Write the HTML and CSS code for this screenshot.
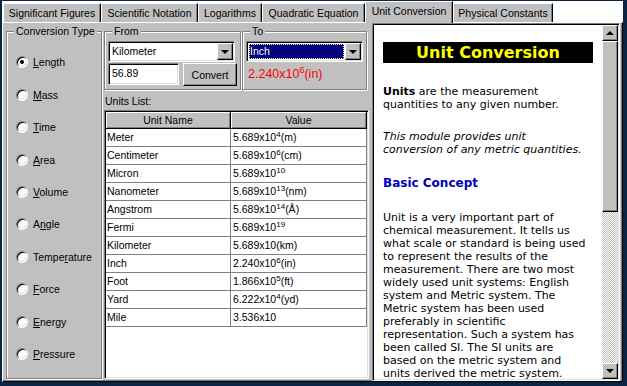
FILE: index.html
```html
<!DOCTYPE html>
<html lang="en">
<head>
    <meta charset="UTF-8">
    <meta name="viewport" content="width=device-width, initial-scale=1.0">
    <title>Unit Conversion</title>
    <link rel="stylesheet" href="styles.css">
</head>
<body>
<div class="window">
    <div class="tabs">
        <div class="tab tab-sig">Significant Figures</div>
        <div class="tab tab-sci">Scientific Notation</div>
        <div class="tab tab-log">Logarithms</div>
        <div class="tab tab-quad">Quadratic Equation</div>
        <div class="tab tab-unit active">Unit Conversion</div>
        <div class="tab tab-phys">Physical Constants</div>
    </div>

    <div class="panel">
        <!-- left: radio list -->
        <div class="group type-group">
            <div class="group-title">Conversion Type</div>
            <div class="options">
                <div class="option"><span class="radio checked"></span><span><u>L</u>ength</span></div>
                <div class="option"><span class="radio"></span><span><u>M</u>ass</span></div>
                <div class="option"><span class="radio"></span><span><u>T</u>ime</span></div>
                <div class="option"><span class="radio"></span><span><u>A</u>rea</span></div>
                <div class="option"><span class="radio"></span><span><u>V</u>olume</span></div>
                <div class="option"><span class="radio"></span><span>A<u>n</u>gle</span></div>
                <div class="option"><span class="radio"></span><span>Tempe<u>r</u>ature</span></div>
                <div class="option"><span class="radio"></span><span><u>F</u>orce</span></div>
                <div class="option"><span class="radio"></span><span><u>E</u>nergy</span></div>
                <div class="option"><span class="radio"></span><span><u>P</u>ressure</span></div>
            </div>
        </div>

        <!-- middle: from / to and the list -->
        <div class="middle">
            <div class="ends">
                <div class="group from-group">
                    <div class="group-title">From</div>
                    <div class="group-body">
                        <div class="combo from-combo">
                            <span class="combo-value">Kilometer</span>
                            <span class="btn drop-btn"><span class="arrow-down"></span></span>
                        </div>
                        <div class="from-row">
                            <div class="field">56.89</div>
                            <div class="btn convert-btn">Convert</div>
                        </div>
                    </div>
                </div>
                <div class="group to-group">
                    <div class="group-title">To</div>
                    <div class="group-body">
                        <div class="combo to-combo">
                            <span class="combo-value selected">Inch</span>
                            <span class="btn drop-btn"><span class="arrow-down"></span></span>
                        </div>
                        <div class="result">2.240x10<sup>6</sup>(in)</div>
                    </div>
                </div>
            </div>

            <div class="list-label">Units List:</div>
            <div class="listview">
                <table>
                    <thead>
                        <tr><th class="col-name">Unit Name</th><th>Value</th></tr>
                    </thead>
                    <tbody>
                        <tr><td>Meter</td><td>5.689x10<sup>4</sup>(m)</td></tr>
                        <tr><td>Centimeter</td><td>5.689x10<sup>6</sup>(cm)</td></tr>
                        <tr><td>Micron</td><td>5.689x10<sup>10</sup></td></tr>
                        <tr><td>Nanometer</td><td>5.689x10<sup>13</sup>(nm)</td></tr>
                        <tr><td>Angstrom</td><td>5.689x10<sup>14</sup>(Å)</td></tr>
                        <tr><td>Fermi</td><td>5.689x10<sup>19</sup></td></tr>
                        <tr><td>Kilometer</td><td>5.689x10(km)</td></tr>
                        <tr><td>Inch</td><td>2.240x10<sup>6</sup>(in)</td></tr>
                        <tr><td>Foot</td><td>1.866x10<sup>5</sup>(ft)</td></tr>
                        <tr><td>Yard</td><td>6.222x10<sup>4</sup>(yd)</td></tr>
                        <tr><td>Mile</td><td>3.536x10</td></tr>
                    </tbody>
                </table>
            </div>
        </div>

        <!-- right: help viewer -->
        <div class="viewer">
            <div class="doc">
                <div class="banner">Unit Conversion</div>
                <p><b>Units</b> are the measurement quantities to any given number.</p>
                <p><i>This module provides unit conversion of any metric quantities.</i></p>
                <h2>Basic Concept</h2>
                <p>Unit is a very important part of chemical measurement. It tells us what scale or standard is being used to represent the results of the measurement. There are two most widely used unit systems: English system and Metric system. The Metric system has been used preferably in scientific representation. Such a system has been called SI. The SI units are based on the metric system and units derived the metric system.</p>
            </div>
            <div class="scrollbar">
                <div class="btn sb-btn"><span class="arrow-up"></span></div>
                <div class="btn sb-thumb"></div>
                <div class="sb-track"></div>
                <div class="btn sb-btn"><span class="arrow-down"></span></div>
            </div>
        </div>
    </div>
</div>
</body>
</html>
```

FILE: styles.css
```css
body {
    margin: 0;
    background: #0a2444;
    font-family: "Liberation Sans", Arial, sans-serif;
    font-size: 10.5px;
    color: #000;
}
.window {
    margin: 1px 0 0 2px;
    width: 621px;
    height: 381px;
    background: #fff;
    display: flex;
    flex-direction: column;
}

/* tabs */
.tabs {
    height: 21px;
    display: flex;
    align-items: flex-end;
    padding-left: 1px;
}
.tab {
    height: 19px;
    line-height: 18px;
    box-sizing: border-box;
    text-align: center;
    white-space: nowrap;
    background: #c0c0c0;
    border-top: 1px solid #fff;
    border-left: 1px solid #fff;
    border-right: 1px solid #000;
    box-shadow: inset -1px 0 #808080;
}
.tab.active {
    height: 22px;
    line-height: 19px;
    margin-bottom: -1px;
    position: relative;
    z-index: 1;
}
.tab-sig { width: 98px; }
.tab-sci { width: 97px; }
.tab-log { width: 64px; }
.tab-quad { width: 103px; }
.tab-unit { width: 88px; }
.tab-phys { width: 100px; }

.panel {
    height: 360px;
    box-sizing: border-box;
    display: flex;
    background: #c0c0c0;
    border-top: 1px solid #fff;
    border-left: 1px solid #fff;
    border-right: 1px solid #000;
    border-bottom: 1px solid #000;
    box-shadow: inset -1px -1px #808080;
}

/* etched group boxes */
.group {
    box-sizing: border-box;
    border: 1px solid #808080;
    box-shadow: inset 1px 1px #fff, 1px 1px #fff;
}
.group-title {
    width: fit-content;
    margin: -7px 0 0 7px;
    padding: 0 2px;
    line-height: 12px;
    background: #c0c0c0;
}
.type-group {
    width: 96px;
    height: 348px;
    margin: 8px 0 0 3px;
}
.options {
    padding: 9px 0 0 9px;
}
.option {
    height: 32.44px;
    display: flex;
    align-items: center;
    gap: 5px;
}
.radio {
    width: 12px;
    height: 12px;
    box-sizing: border-box;
    border-radius: 50%;
    background: #fff;
    border: 1px solid;
    border-color: #808080 #fff #fff #808080;
    box-shadow: inset 1px 1px #000, inset -1px -1px #dfdfdf;
    display: flex;
    align-items: center;
    justify-content: center;
}
.radio.checked::after {
    content: "";
    width: 4px;
    height: 4px;
    border-radius: 50%;
    background: #000;
}

/* middle column */
.middle {
    width: 265px;
    margin: 8px 0 0 2px;
    display: flex;
    flex-direction: column;
}
.ends {
    display: flex;
    gap: 1px;
}
.from-group {
    width: 137px;
    height: 59px;
}
.to-group {
    width: 125px;
    height: 59px;
}
.group-body {
    padding: 4px 0 0 3px;
}

.combo, .field, .listview, .viewer {
    box-sizing: border-box;
    background: #fff;
    border: 1px solid;
    border-color: #808080 #fff #fff #808080;
    box-shadow: inset 1px 1px #000, inset -1px -1px #dfdfdf;
}
.combo {
    height: 21px;
    padding: 1px;
    display: flex;
    align-items: stretch;
}
.from-combo { width: 127px; }
.to-combo { width: 117px; }
.combo-value {
    flex: 1;
    padding-left: 2px;
    line-height: 17px;
}
.combo-value.selected {
    margin: 1px;
    padding-left: 1px;
    line-height: 15px;
    background: #000080;
    color: #fff;
    outline: 1px dotted #ffff90;
    outline-offset: -1px;
}
.btn {
    box-sizing: border-box;
    background: #c0c0c0;
    border: 1px solid;
    border-color: #fff #000 #000 #fff;
    box-shadow: inset -1px -1px #808080;
    display: flex;
    align-items: center;
    justify-content: center;
}
.drop-btn {
    width: 16px;
}
.arrow-down, .arrow-up {
    width: 0;
    height: 0;
    border-left: 4px solid transparent;
    border-right: 4px solid transparent;
}
.arrow-down { border-top: 4px solid #000; }
.arrow-up { border-bottom: 4px solid #000; }

.from-row {
    display: flex;
    gap: 4px;
    margin-top: 1px;
}
.field {
    width: 71px;
    height: 22px;
    padding: 3px 0 0 3px;
}
.convert-btn {
    width: 54px;
    height: 23px;
}
.result {
    margin: 5px 0 0 2px;
    line-height: 14px;
    font-size: 12.5px;
    color: #ff0000;
}
.result sup {
    font-size: 9px;
    line-height: 0;
}

.list-label {
    margin-top: 5px;
    padding-left: 1px;
    line-height: 12px;
}
.listview {
    flex: 1;
    margin: 3px 0 2px;
    padding: 1px;
    overflow: hidden;
}
table {
    width: 100%;
    border-collapse: collapse;
    table-layout: fixed;
}
th {
    height: 16px;
    padding: 0;
    font-weight: normal;
    background: #c0c0c0;
    border-right: 1px solid #000;
    border-bottom: 1px solid #000;
    box-shadow: inset 1px 1px #fff, inset -1px -1px #808080;
}
.col-name {
    width: 124px;
}
td {
    height: 17px;
    padding: 0 0 0 2px;
    line-height: 17px;
    white-space: nowrap;
    border-right: 1px solid #808080;
    border-bottom: 1px solid #808080;
}
td:first-child {
    padding-left: 1px;
}
td sup {
    font-size: 8px;
    line-height: 0;
}

/* right help pane */
.viewer {
    width: 248px;
    margin-left: 3px;
    padding: 1px;
    display: flex;
}
.doc {
    flex: 1;
    padding: 17px 14px 0 9px;
    overflow: hidden;
    font-family: "DejaVu Sans", Verdana, sans-serif;
    font-size: 11px;
    line-height: 13px;
}
.banner {
    height: 21px;
    line-height: 21px;
    margin: 0 -5px 22px 0;
    background: #000;
    color: #ffff00;
    font-weight: bold;
    font-size: 16px;
    text-align: center;
}
.doc p {
    margin: 0 0 19px;
}
.doc h2 {
    margin: 0 0 19px;
    font-size: 12px;
    line-height: 17px;
    color: #0000c0;
}
.scrollbar {
    width: 16px;
    display: flex;
    flex-direction: column;
}
.sb-btn {
    height: 16px;
}
.sb-thumb {
    height: 171px;
}
.sb-track {
    flex: 1;
    background: repeating-conic-gradient(#c0c0c0 0 25%, #fff 0 50%) 0 0 / 2px 2px;
}
```
